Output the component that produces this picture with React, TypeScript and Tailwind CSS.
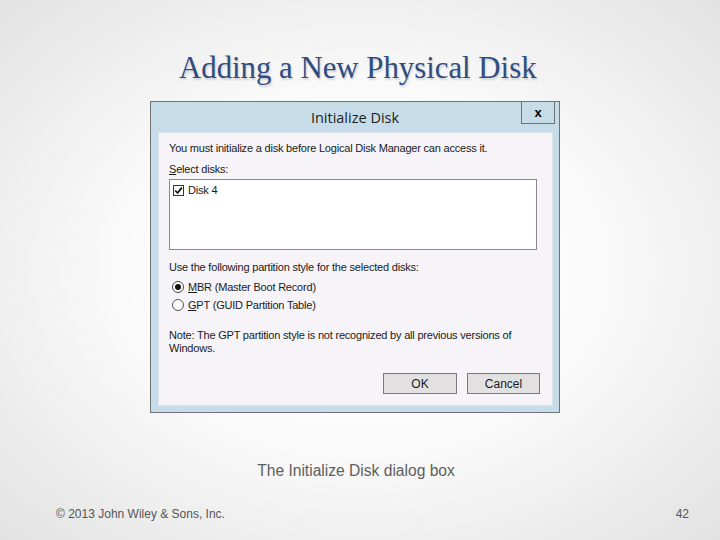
import React from "react";

const sans = { fontFamily: '"Liberation Sans", Arial, sans-serif' };

export default function App() {
  return (
    <div
      className="w-[720px] h-[540px] overflow-hidden flex flex-col bg-[radial-gradient(ellipse_at_center,#ffffff_0%,#fbfbfb_45%,#e2e2e2_100%)]"
      style={sans}
    >
      <div className="h-[101px] flex flex-col">
        <h1
          className="mt-[50px] ml-[179px] text-[30.8px] leading-[36px] text-[#2f4d7e] [text-shadow:1px_2px_2px_rgba(0,0,0,0.16)]"
          style={{ fontFamily: '"Liberation Serif", "DejaVu Serif", serif' }}
        >
          Adding a New Physical Disk
        </h1>
      </div>

      {/* dialog */}
      <div className="ml-[150px] w-[410px] h-[312px] border border-[#6f7377] bg-[#c7dce9] flex flex-col">
        <div className="h-[30px] flex relative">
          <div
            className="flex-1 text-center pt-[5px] text-[14.5px] text-[#1e1e1e]"
            style={{ fontFamily: '"Open Sans", "Noto Sans", sans-serif' }}
          >
            Initialize Disk
          </div>
          <div className="absolute right-[4px] top-[-1px] w-[34px] h-[23px] border border-[#6f7377] bg-[#c7dce9] flex items-center justify-center text-[13px] font-bold text-black">
            x
          </div>
        </div>
        <div className="ml-[7px] mr-[6px] h-[274px] bg-[#f6f4f8] border border-[#dde4ea] px-[10px] pt-[8px] text-[11px] text-[#1a1a1a] tracking-[-0.2px]">
          <div className="leading-[14px]">
            You must initialize a disk before Logical Disk Manager can access it.
          </div>
          <div className="mt-[7px] leading-[14px]">
            <span className="underline">S</span>elect disks:
          </div>
          <div className="mt-[3px] w-[368px] h-[71px] bg-white border border-[#8a8a8a] pt-[3px] pl-[3px]">
            <div className="flex items-center gap-[4px] leading-[14px]">
              <span className="w-[11px] h-[11px] border border-[#333] bg-white flex items-center justify-center">
                <svg width="9" height="9" viewBox="0 0 9 9">
                  <path d="M1.2 4.5 L3.6 7 L7.8 1.6" stroke="#111" strokeWidth="1.8" fill="none" />
                </svg>
              </span>
              <span>Disk 4</span>
            </div>
          </div>
          <div className="mt-[10px] leading-[14px]">
            Use the following partition style for the selected disks:
          </div>
          <div className="mt-[6px] flex items-center gap-[4px] leading-[14px] pl-[3px]">
            <span className="w-[12px] h-[12px] rounded-full border border-[#444] bg-white flex items-center justify-center">
              <span className="w-[6px] h-[6px] rounded-full bg-[#111]" />
            </span>
            <span>
              <span className="underline">M</span>BR (Master Boot Record)
            </span>
          </div>
          <div className="mt-[4px] flex items-center gap-[4px] leading-[14px] pl-[3px]">
            <span className="w-[12px] h-[12px] rounded-full border border-[#555] bg-white" />
            <span>
              <span className="underline">G</span>PT (GUID Partition Table)
            </span>
          </div>
          <div className="mt-[17px] leading-[13px] w-[350px]">
            Note: The GPT partition style is not recognized by all previous versions of
            Windows.
          </div>
          <div className="mt-[18px] flex justify-end gap-[10px] pr-[2px]">
            <div className="w-[74px] h-[21px] border border-[#7a7a7a] bg-[#e1e1e1] flex items-center justify-center text-[12px] tracking-normal">
              OK
            </div>
            <div className="w-[73px] h-[21px] border border-[#7a7a7a] bg-[#e1e1e1] flex items-center justify-center text-[12px] tracking-normal">
              Cancel
            </div>
          </div>
        </div>
      </div>

      <div className="mt-[49px] text-center ml-[-8px] text-[15.6px] leading-[18px] text-[#5e5e5e]">
        The Initialize Disk dialog box
      </div>

      <div className="mt-[27px] flex justify-between pl-[56px] pr-[31px] text-[12px] leading-[14px] text-[#555]">
        <span>© 2013 John Wiley &amp; Sons, Inc.</span>
        <span>42</span>
      </div>
    </div>
  );
}
